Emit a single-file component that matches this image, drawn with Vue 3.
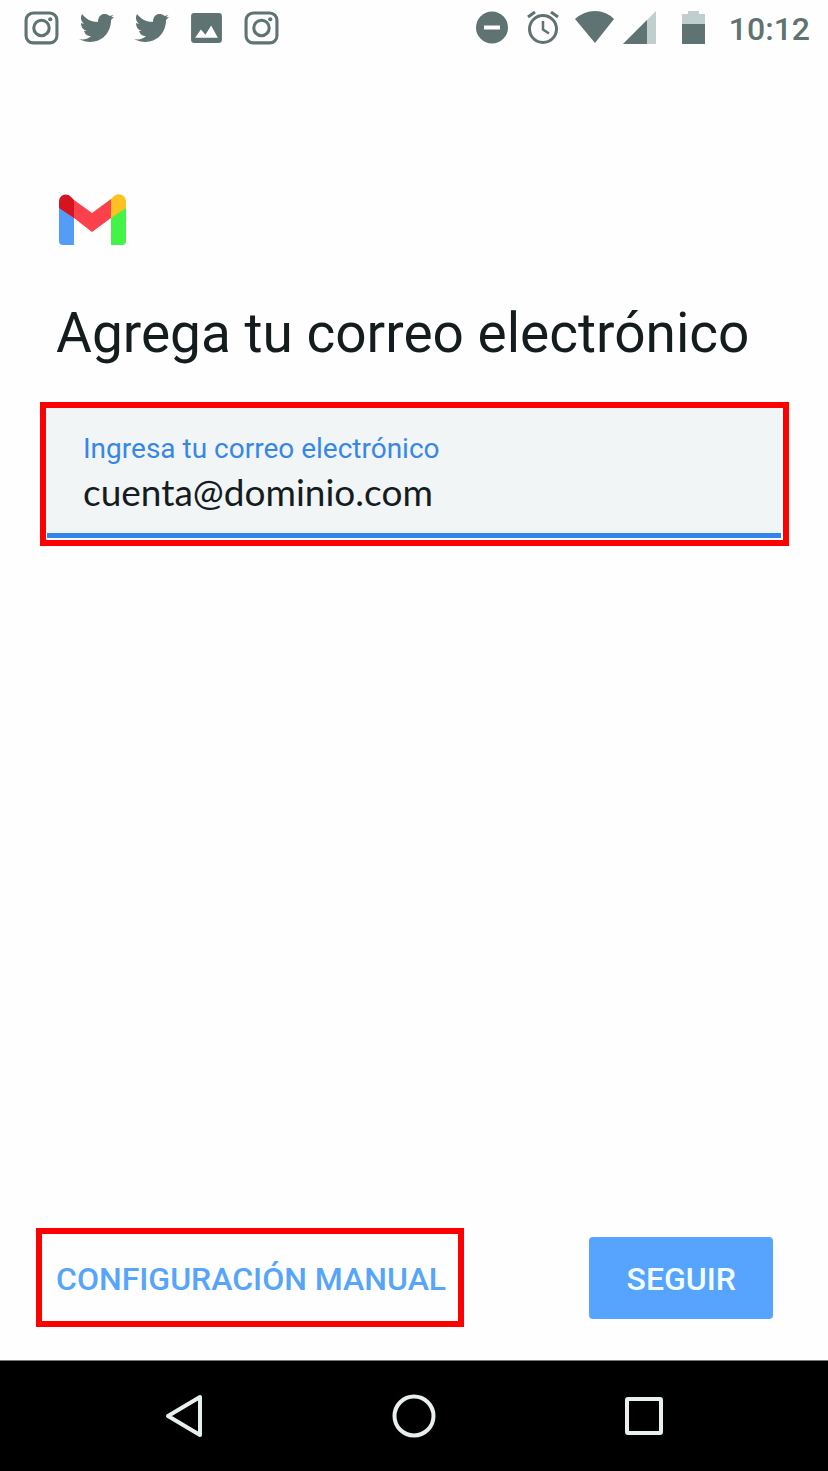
<script setup>
import { ref } from 'vue'

const email = ref('cuenta@dominio.com')
const notifications = ['instagram', 'twitter', 'twitter', 'image', 'instagram']
</script>

<template>
  <div class="screen">
    <header class="status">
      <div class="notifications">
        <template v-for="(kind, i) in notifications" :key="i">
          <svg v-if="kind === 'instagram'" class="note" viewBox="0 0 34 34" aria-hidden="true">
            <rect x="2" y="2" width="30" height="29" rx="7" fill="none" stroke="currentColor" stroke-width="3" />
            <circle cx="17" cy="16.500" r="7.500" fill="none" stroke="currentColor" stroke-width="3" />
            <circle cx="25.500" cy="8" r="2" fill="currentColor" />
          </svg>
          <svg v-else-if="kind === 'twitter'" class="note" viewBox="0 0 35 35" aria-hidden="true">
            <path fill="currentColor" d="M35 6l-3 .3 2.500-2.300-4 1C26 1 19 3 19 11 12 11 7 8 3 3c-2 4-1 7 2 10l-3-1c0 4 2 7 6 8H5c1 3 3 5 7 5-3 3-7 4-12 3 15 8 32-1 32-19z" />
          </svg>
          <svg v-else class="note" viewBox="0 0 34 34" aria-hidden="true">
            <rect x="2" y="2" width="30" height="29" rx="3" fill="currentColor" />
            <path d="M6 26l5.500-8 4.500 5 5.500-9 6.500 12z" fill="#fff" />
          </svg>
        </template>
      </div>
      <div class="system">
        <svg width="42" height="34" viewBox="0 0 42 34" aria-hidden="true">
          <circle cx="21" cy="16.500" r="16" fill="currentColor" />
          <path d="M13 16.500h16" stroke="#fff" stroke-width="4" />
        </svg>
        <svg width="46" height="34" viewBox="0 0 46 34" aria-hidden="true" fill="none" stroke="currentColor">
          <circle cx="22" cy="18" r="13.500" stroke-width="3" />
          <path d="M22 10v8.500l6 4" stroke-width="2.500" />
          <path d="M7 6l7-5M37 6l-7-5" stroke-width="3" />
        </svg>
        <svg width="40" height="34" viewBox="0 0 40 34" aria-hidden="true">
          <path d="M0 8Q9 0 20 0T39 8L20 32z" fill="currentColor" />
        </svg>
        <svg width="34" height="34" viewBox="0 0 34 34" aria-hidden="true">
          <path d="M33 0v33H0z" fill="#c0cecd" />
          <path d="M24 9v24H0z" fill="currentColor" />
        </svg>
        <svg width="56" height="34" viewBox="0 0 56 34" aria-hidden="true">
          <path d="M17 3h6V0h11v3h6v10H17z" fill="#c0cecd" />
          <path d="M17 13h23v20H17z" fill="currentColor" />
        </svg>
        <time class="clock">10:12</time>
      </div>
    </header>

    <main class="content">
      <svg class="logo" viewBox="0 0 68 51" role="img" aria-label="Gmail">
        <path d="M1 12l15 11v28H5q-4 0-4-4z" fill="#539df8" />
        <path d="M53 23l15-11v35q0 4-4 4H53z" fill="#44f347" />
        <path d="M16 6l18 13L53 5v19L34 38 16 24z" fill="#fb414b" />
        <path d="M1 14V8C1 1 8-2 13 3l3 3v18z" fill="#d51420" />
        <path d="M68 14V8c0-7-7-10-12-6l-3 3v19z" fill="#fec124" />
      </svg>
      <h1>Agrega tu correo electrónico</h1>
      <form id="account" class="highlight field-frame" @submit.prevent>
        <div class="field">
          <label for="email">Ingresa tu correo electrónico</label>
          <input id="email" v-model="email" type="email" />
        </div>
      </form>
    </main>

    <div class="actions">
      <button type="button" class="highlight manual">CONFIGURACIÓN MANUAL</button>
      <button type="submit" form="account" class="next">SEGUIR</button>
    </div>

    <nav class="navbar">
      <button type="button" aria-label="Atrás">
        <svg width="44" height="44" viewBox="0 0 44 44"><path d="M38 3v38L6 22z" /></svg>
      </button>
      <button type="button" aria-label="Inicio">
        <svg width="44" height="44" viewBox="0 0 44 44"><circle cx="22" cy="22" r="19.500" /></svg>
      </button>
      <button type="button" aria-label="Recientes">
        <svg width="44" height="44" viewBox="0 0 44 44"><rect x="5" y="5" width="34" height="34" rx="1" /></svg>
      </button>
    </nav>
  </div>
</template>

<style>
body {
  margin: 0;
  background: #fefefe;
}
</style>

<style scoped>
.screen {
  display: flex;
  flex-direction: column;
  min-height: 100vh;
  background: #fefefe;
  color: #151c1e;
  font-family: Roboto, "Liberation Sans", sans-serif;
}
button {
  border: 0;
  padding: 0;
  background: none;
  font: inherit;
  cursor: pointer;
}
svg {
  display: block;
  flex: none;
}
.status {
  display: flex;
  justify-content: space-between;
  align-items: center;
  height: 56px;
  padding: 0 18px 0 24px;
  color: #5f7372;
}
.notifications {
  display: flex;
  gap: 20px;
}
.note {
  width: 35px;
  height: 35px;
}
.system {
  display: flex;
  align-items: center;
  gap: 8px;
}
.clock {
  padding-top: 2px;
  font-size: 32px;
  font-weight: 500;
  line-height: 36px;
}
.content {
  flex: 1;
  padding: 138px 39px 0 40px;
}
.logo {
  width: 68px;
  height: 51px;
  margin-left: 18px;
}
h1 {
  margin: 56px 0 36px 16px;
  font-size: 55px;
  font-weight: 400;
  line-height: 65px;
}
.highlight {
  border: 6px solid #fe0000;
}
.field-frame {
  padding: 0 2px 2px 1px;
}
.field {
  display: flex;
  flex-direction: column;
  height: 130px;
  box-sizing: border-box;
  padding: 25px 36px 0;
  border-bottom: 5px solid #3484ee;
  background: #f1f5f6;
}
label {
  color: #3787e6;
  font-size: 28px;
  line-height: 32px;
}
input {
  width: 100%;
  height: 52px;
  padding: 0;
  border: 0;
  outline: 0;
  background: none;
  color: #151c1e;
  font-family: Lato, Roboto, sans-serif;
  font-size: 37px;
}
.actions {
  display: flex;
  justify-content: space-between;
  align-items: center;
  padding: 0 55px 33px 36px;
}
.manual {
  padding: 26px 12px 23px 14px;
  color: #57a4fb;
  font-size: 32px;
  font-weight: 500;
  line-height: 38px;
}
.next {
  padding: 23px 37px 21px 38px;
  border-radius: 4px;
  background: #57a4ff;
  color: #f2feff;
  font-size: 32px;
  font-weight: 500;
  line-height: 38px;
}
.navbar {
  display: flex;
  justify-content: center;
  gap: 186px;
  padding: 33px 0;
  border-top: 1px solid #777;
  background: #000;
}
.navbar svg {
  fill: none;
  stroke: #e8f0ef;
  stroke-width: 4;
  stroke-linejoin: round;
}
</style>
